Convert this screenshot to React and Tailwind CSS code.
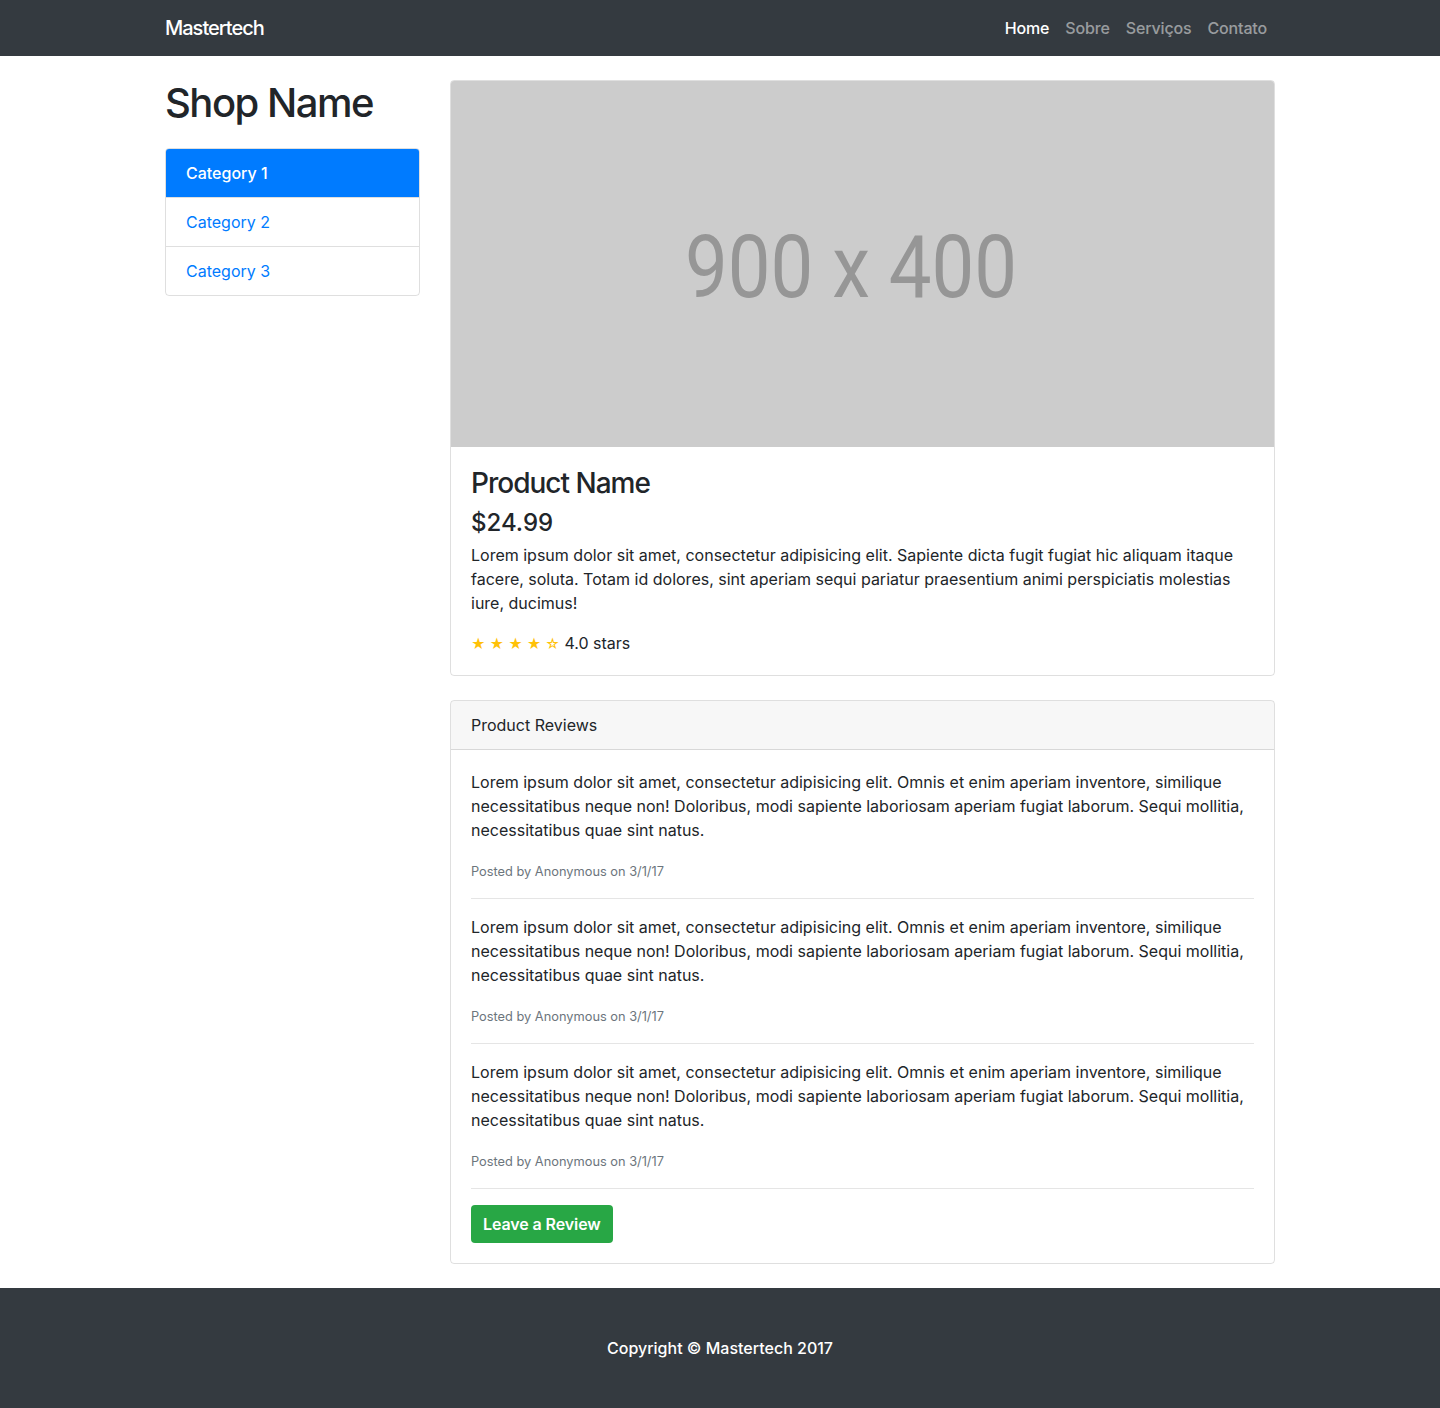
import React from 'react';

const bodyFont = { fontFamily: 'Inter, "Noto Sans", "Liberation Sans", sans-serif' };

const navLinks = [
    { label: 'Home', active: true },
    { label: 'Sobre' },
    { label: 'Serviços' },
    { label: 'Contato' },
];

const categories = ['Category 1', 'Category 2', 'Category 3'];

const reviewText =
    'Lorem ipsum dolor sit amet, consectetur adipisicing elit. Omnis et enim aperiam inventore, similique necessitatibus neque non! Doloribus, modi sapiente laboriosam aperiam fugiat laborum. Sequi mollitia, necessitatibus quae sint natus.';

function Navbar() {
    return (
        <nav className="bg-[#343a40] h-14">
            <div className="max-w-[1140px] mx-auto px-[15px] h-full flex items-center justify-between">
                <a className="text-white text-[20px] font-medium tracking-[-1px]">Mastertech</a>
                <ul className="flex">
                    {navLinks.map((link) => (
                        <li key={link.label}>
                            <a
                                className={`block px-2 text-[16px] font-medium tracking-[-0.15px] ${
                                    link.active ? 'text-white' : 'text-[rgba(255,255,255,0.5)]'
                                }`}
                            >
                                {link.label}
                            </a>
                        </li>
                    ))}
                </ul>
            </div>
        </nav>
    );
}

function Sidebar() {
    return (
        <div className="w-[255px] shrink-0">
            <h1 className="text-[40px] leading-[48px] mt-[23px] mb-[21px] text-[#212529] font-medium tracking-[-1.5px]">
                Shop Name
            </h1>
            <div className="flex flex-col rounded-[4px] border border-[rgba(0,0,0,0.125)] overflow-hidden">
                {categories.map((cat, i) => (
                    <a
                        key={cat}
                        className={`px-5 py-3 leading-6 text-[16px] ${
                            i === 0
                                ? 'bg-[#007bff] text-white font-medium'
                                : 'text-[#007bff] border-t border-[rgba(0,0,0,0.125)]'
                        }`}
                    >
                        {cat}
                    </a>
                ))}
            </div>
        </div>
    );
}

function ProductCard() {
    return (
        <div className="mt-6 border border-[rgba(0,0,0,0.125)] rounded-[4px] overflow-hidden">
            {/* placeholder image */}
            <div className="h-[366px] bg-[#cccccc] flex items-center justify-center overflow-hidden">
                <span
                    className="inline-block text-[88px] leading-none text-[#969696] scale-x-[0.865] mt-[6px] mr-[23px]"
                    style={{ fontFamily: 'Roboto, "Liberation Sans", sans-serif' }}
                >
                    900 x 400
                </span>
            </div>
            <div className="p-5 text-[#212529]">
                <h3 className="text-[28px] leading-[1.2] font-medium mb-2 tracking-[-1px]">Product Name</h3>
                <h4 className="text-[24px] leading-[1.2] font-medium mb-[6px]">$24.99</h4>
                <p className="text-[16px] leading-6 mb-4">
                    Lorem ipsum dolor sit amet, consectetur adipisicing elit. Sapiente dicta fugit fugiat hic aliquam
                    itaque facere, soluta. Totam id dolores, sint aperiam sequi pariatur praesentium animi perspiciatis
                    molestias iure, ducimus!
                </p>
                <div className="h-6 leading-6 text-[16px] overflow-hidden">
                    <span className="text-[#ffc107] text-[14px] leading-none">★ ★ ★ ★ ☆</span> 4.0 stars
                </div>
            </div>
        </div>
    );
}

function ReviewsCard() {
    return (
        <div className="mt-6 border border-[rgba(0,0,0,0.125)] rounded-[4px] overflow-hidden text-[#212529]">
            <div className="px-5 py-3 leading-6 bg-[rgba(0,0,0,0.03)] border-b border-[rgba(0,0,0,0.125)]">
                Product Reviews
            </div>
            <div className="p-5">
                {[0, 1, 2].map((i) => (
                    <div key={i}>
                        <p className="leading-6 mb-4">{reviewText}</p>
                        <div className="h-6 leading-[28px] text-[12.8px] text-[#6c757d]">Posted by Anonymous on 3/1/17</div>
                        <hr className="my-4 border-0 border-t border-[rgba(0,0,0,0.1)]" />
                    </div>
                ))}
                <a className="inline-block bg-[#28a745] text-white font-semibold rounded-[4px] px-3 py-[7px] leading-6 text-[16px] tracking-[-0.1px]">
                    Leave a Review
                </a>
            </div>
        </div>
    );
}

export default function App() {
    return (
        <div className="bg-white min-h-screen" style={bodyFont}>
            <Navbar />
            <div className="max-w-[1140px] mx-auto px-[15px] flex gap-[30px]">
                <Sidebar />
                <div className="flex-1 min-w-0">
                    <ProductCard />
                    <ReviewsCard />
                </div>
            </div>
            <footer className="mt-6 py-12 bg-[#343a40]">
                <p className="m-0 text-center text-white leading-6 font-medium">Copyright © Mastertech 2017</p>
            </footer>
        </div>
    );
}
